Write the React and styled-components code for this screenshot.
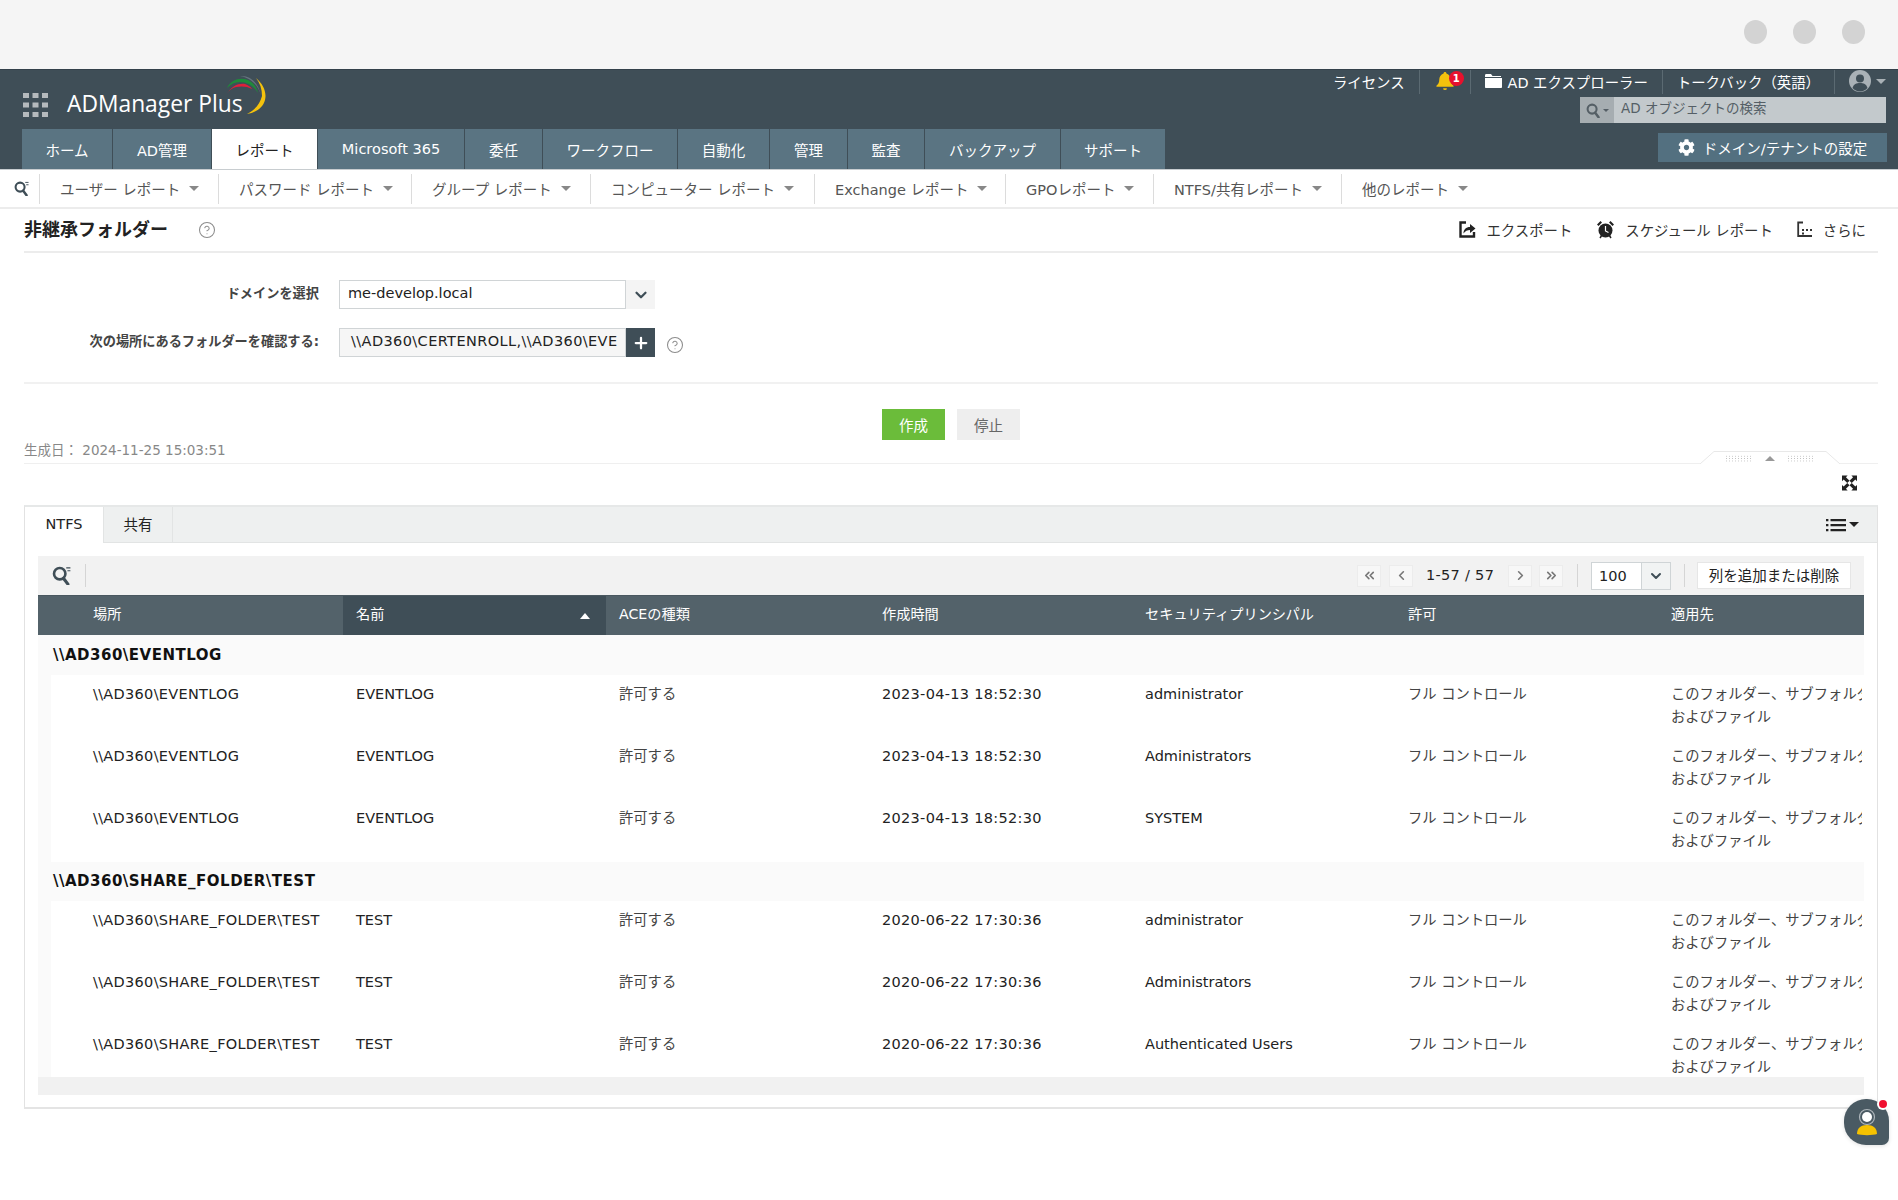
import styled, { createGlobalStyle } from "styled-components";
import { CircleHelp, ChevronDown, ChevronLeft, ChevronRight, ChevronsLeft, ChevronsRight, Plus } from "lucide-react";
import { FaCog } from "react-icons/fa";

const FONT = `"DejaVu Sans", "Noto Sans CJK JP", sans-serif`;

const Global = createGlobalStyle`
  html, body { margin: 0; padding: 0; background: #fff; }
  body { font-family: ${FONT}; color: #222; }
  * { box-sizing: border-box; }
`;

const Page = styled.div`
  width: 1898px;
  height: 1200px;
  overflow: hidden;
  position: relative;
`;

const WindowBar = styled.div`
  height: 69px;
  background: #f5f5f5;
  display: flex;
  justify-content: flex-end;
  align-items: flex-start;
  gap: 26px;
  padding: 20px 33px 0 0;
`;

const WindowDot = styled.span`
  width: 23px;
  height: 24px;
  border-radius: 50%;
  background: #d3d3d3;
`;

const Header = styled.header`
  height: 101px;
  background: #3f4e57;
  border-top: 1px solid #33404a;
  border-bottom: 1px solid #c8cdd0;
  display: flex;
  flex-direction: column;
`;

const HeaderTop = styled.div`
  height: 59px;
  display: flex;
  justify-content: space-between;
  padding: 0 12px 0 23px;
`;

const Brand = styled.div`
  display: flex;
  align-items: center;
  gap: 19px;
  padding-top: 11px;
`;

const BrandName = styled.span`
  font-family: "Open Sans", sans-serif;
  font-size: 22.8px;
  font-weight: 500;
  color: #fff;
`;

const LogoWrap = styled.div`
  position: relative;
  line-height: 31px;
`;

const LogoMark = styled.svg`
  position: absolute;
  left: 160px;
  top: -12px;
  overflow: visible;
`;

const UtilColumn = styled.div`
  display: flex;
  flex-direction: column;
  align-items: flex-end;
`;

const UtilRow = styled.div`
  height: 27px;
  display: flex;
  align-items: flex-start;
  color: #fff;
  font-size: 14.4px;
`;

const UtilItem = styled.div`
  display: flex;
  align-items: center;
  gap: ${(p) => (p.$last ? 5 : 6)}px;
  height: 24px;
  padding: 0 ${(p) => (p.$last ? 0 : p.$pad || 14)}px 2px ${(p) => p.$pad || 14}px;
  border-right: ${(p) => (p.$last ? "none" : "1px solid #5b6a72")};
  position: relative;
`;

const Badge = styled.span`
  position: absolute;
  top: 1px;
  right: 6px;
  width: 15px;
  height: 15px;
  border-radius: 50%;
  background: #e8112d;
  color: #fff;
  font-size: 10px;
  font-weight: 700;
  line-height: 15px;
  text-align: center;
`;

const SearchBox = styled.div`
  width: 306px;
  height: 26px;
  display: flex;
  background: #c3c9cc;
  color: #555f66;
  font-size: 13.5px;
  line-height: 23px;
`;

const SearchIconBox = styled.div`
  width: 34px;
  background: #a6adb1;
  display: flex;
  align-items: center;
  justify-content: center;
  gap: 2px;
`;

const SearchText = styled.span`
  padding-left: 7px;
`;

const HeaderBottom = styled.div`
  height: 40px;
  display: flex;
  justify-content: space-between;
  padding: 0 11px 0 22px;
`;

const Tabs = styled.nav`
  display: flex;
  gap: 1px;
`;

const Tab = styled.div`
  width: ${(p) => p.$w}px;
  display: flex;
  align-items: center;
  justify-content: center;
  font-size: 14.5px;
  background: ${(p) => (p.$active ? "#fff" : "#5a7482")};
  color: ${(p) => (p.$active ? "#222" : "#fff")};
`;

const SettingsButton = styled.div`
  width: 229px;
  height: 29px;
  margin-top: 4px;
  background: #537080;
  color: #fff;
  font-size: 14.5px;
  display: flex;
  align-items: center;
  justify-content: center;
  gap: 8px;
`;

const SubNav = styled.nav`
  height: 39px;
  display: flex;
  align-items: center;
  padding-left: 14px;
  border-bottom: 2px solid #ececec;
`;

const SubSearch = styled.div`
  width: 26px;
  height: 30px;
  display: flex;
  align-items: center;
  border-right: 1px solid #dcdcdc;
`;

const SubItem = styled.div`
  width: ${(p) => p.$w}px;
  height: 30px;
  padding-left: 20px;
  display: flex;
  align-items: center;
  gap: 9px;
  font-size: 14.5px;
  color: #555;
  white-space: nowrap;
  border-right: ${(p) => (p.$last ? "none" : "1px solid #dcdcdc")};
`;

const Caret = styled.span`
  width: 0;
  height: 0;
  border-left: ${(p) => p.$size || 5}px solid transparent;
  border-right: ${(p) => p.$size || 5}px solid transparent;
  border-top: ${(p) => p.$size || 5}px solid ${(p) => p.$color || "#888"};
  transform: ${(p) => (p.$up ? "rotate(180deg)" : "none")};
`;

const Content = styled.main`
  padding: 0 20px 0 24px;
`;

const TitleRow = styled.div`
  height: 44px;
  display: flex;
  align-items: center;
  justify-content: space-between;
  border-bottom: 2px solid #ececec;
`;

const TitleLeft = styled.div`
  display: flex;
  align-items: center;
  gap: 30px;
`;

const Title = styled.h1`
  margin: 0;
  font-size: 18px;
  font-weight: 700;
  color: #222;
  position: relative;
  top: -2px;
`;

const Actions = styled.div`
  display: flex;
  align-items: center;
  gap: 24px;
  padding: 0 12px 2px 0;
`;

const Action = styled.div`
  display: flex;
  align-items: center;
  gap: 10px;
  font-size: 14.4px;
  color: #333;
`;

const FormArea = styled.section`
  height: 131px;
  padding-top: 27px;
  border-bottom: 2px solid #f1f1f1;
  display: flex;
  flex-direction: column;
  gap: 19px;
`;

const FormRow = styled.div`
  display: flex;
  align-items: center;
  height: 29px;
`;

const FormLabel = styled.label`
  width: 295px;
  text-align: right;
  font-size: 13.2px;
  font-weight: 600;
  color: #444;
  margin: 0 20px 5px 0;
`;

const FieldBox = styled.div`
  width: 316px;
  height: 29px;
  border: 1px solid #d0d4d6;
  background: ${(p) => p.$bg || "#fff"};
  display: flex;
  font-size: 14.5px;
  color: #222;
`;

const FieldText = styled.div`
  flex: 1;
  line-height: 25px;
  padding-left: ${(p) => p.$pad || 8}px;
  letter-spacing: ${(p) => p.$spacing || 0}px;
  overflow: hidden;
  white-space: nowrap;
`;

const FieldChevron = styled.div`
  width: 30px;
  margin: -1px -1px -1px 0;
  display: flex;
  align-items: center;
  justify-content: center;
  background: ${(p) => (p.$dark ? "#3f4e57" : "#f4f4f4")};
  border-left: 1px solid #d0d4d6;
  color: ${(p) => (p.$dark ? "#fff" : "#3f4e57")};
`;

const FieldHelp = styled.span`
  margin: 5px 0 0 11px;
  display: flex;
`;

const ButtonRow = styled.div`
  display: flex;
  justify-content: center;
  gap: 12px;
  padding: 25px 0 0;
  height: 57px;
`;

const Button = styled.div`
  width: 63px;
  height: 31px;
  display: flex;
  align-items: center;
  justify-content: center;
  font-size: 14.5px;
  background: ${(p) => (p.$primary ? "#6bbc3a" : "#eeeeee")};
  color: ${(p) => (p.$primary ? "#fff" : "#666")};
`;

const GeneratedRow = styled.div`
  height: 23px;
  line-height: 18px;
  font-size: 13.5px;
  color: #888;
  border-bottom: 1px solid #efefef;
  position: relative;
`;

const Handle = styled.div`
  position: absolute;
  right: 38px;
  bottom: -1px;
  width: 140px;
  height: 13px;
  display: flex;
  align-items: center;
  justify-content: center;
  gap: 12px;
  padding-top: 2px;
`;

const HandleShape = styled.svg`
  position: absolute;
  left: 0;
  top: 0;
`;

const HandleDots = styled.span`
  width: 28px;
  height: 7px;
  position: relative;
  background-image: radial-gradient(#bbb 0.7px, transparent 0.8px);
  background-size: 3px 2.4px;
`;

const ExpandRow = styled.div`
  height: 41px;
  display: flex;
  align-items: center;
  justify-content: flex-end;
  padding: 0 21px 3px 0;
`;

const Panel = styled.section`
  height: 604px;
  width: 1854px;
  border: 1px solid #e2e2e2;
  border-top: 2px solid #e6e8e8;
  border-bottom: 2px solid #e4e4e4;
`;

const PanelTabs = styled.div`
  height: 36px;
  background: #eef0f0;
  border-bottom: 1px solid #e2e4e4;
  display: flex;
  align-items: stretch;
`;

const PanelTab = styled.div`
  width: ${(p) => p.$w}px;
  display: flex;
  align-items: center;
  justify-content: center;
  padding-bottom: 2px;
  font-size: 14.5px;
  color: #222;
  background: ${(p) => (p.$active ? "#fff" : "transparent")};
  margin-bottom: ${(p) => (p.$active ? "-1px" : "0")};
  border-right: 1px solid #e2e4e4;
`;

const ListMenu = styled.div`
  margin-left: auto;
  padding-right: 18px;
  display: flex;
  align-items: center;
  gap: 3px;
`;

const Grid = styled.div`
  margin: 13px 13px 0 13px;
`;

const Toolbar = styled.div`
  height: 39px;
  background: #f2f2f2;
  display: flex;
  align-items: center;
  padding: 0 13px 0 14px;
  font-size: 14.5px;
  color: #222;
`;

const ToolSearch = styled.div`
  height: 23px;
  width: 34px;
  display: flex;
  align-items: center;
  border-right: 1px solid #d5d5d5;
`;

const Pager = styled.div`
  margin-left: auto;
  display: flex;
  align-items: center;
`;

const PageBtn = styled.div`
  width: 24px;
  height: 22px;
  margin-right: ${(p) => p.$mr || 0}px;
  background: #f7f7f7;
  border: 1px solid #ececec;
  color: #777;
  display: flex;
  align-items: center;
  justify-content: center;
`;

const PageCount = styled.span`
  width: 82px;
  margin-bottom: 2px;
  letter-spacing: 0.3px;
  white-space: nowrap;
`;

const ToolSep = styled.span`
  width: 1px;
  height: 23px;
  background: #d5d5d5;
  margin: 0 ${(p) => p.$r}px 0 ${(p) => p.$l}px;
`;

const SizeSelect = styled.div`
  width: 80px;
  height: 28px;
  display: flex;
  background: #fff;
  border: 1px solid #cfd4d6;
  line-height: 26px;
  padding-left: 7px;
`;

const SizeChevron = styled.div`
  margin-left: auto;
  width: 29px;
  background: #f1f3f3;
  border-left: 1px solid #cfd4d6;
  display: flex;
  align-items: center;
  justify-content: center;
  color: #3f4e57;
`;

const ColumnButton = styled.div`
  width: 154px;
  height: 27px;
  background: #fff;
  border: 1px solid #e6e6e6;
  font-size: 14.5px;
  display: flex;
  align-items: center;
  justify-content: center;
  padding-bottom: 2px;
`;

const Table = styled.div`
  height: 500px;
  overflow: hidden;
  position: relative;
`;

const Row = styled.div`
  display: grid;
  grid-template-columns: 305px repeat(5, 263px) 204px;
`;

const HeadRow = styled(Row)`
  height: 40px;
  background: #53626a;
  color: #fff;
  font-size: 14.2px;
  border-top: 1px solid #4a5860;
`;

const HeadCell = styled.div`
  display: flex;
  align-items: center;
  justify-content: space-between;
  padding: 0 16px 5px ${(p) => (p.$first ? 55 : 13)}px;
  background: ${(p) => (p.$sorted ? "#3f4e57" : "transparent")};
`;

const SortArrow = styled.span`
  width: 0;
  height: 0;
  margin-top: 5px;
  border-left: 5px solid transparent;
  border-right: 5px solid transparent;
  border-bottom: 6px solid #fff;
`;

const GroupRow = styled.div`
  height: ${(p) => p.$h}px;
  background: #fafafa;
  padding-left: 15px;
  display: flex;
  align-items: center;
  font-size: 15px;
  font-weight: 700;
  letter-spacing: 0.5px;
  color: #111;
`;

const DataRow = styled(Row)`
  height: 62.4px;
  font-size: 14.5px;
  color: #222;
  background: linear-gradient(to right, #fafafa 13px, #fff 13px);
  line-height: 23px;
  overflow: hidden;
`;

const Cell = styled.div`
  padding: 8px 0 0 ${(p) => (p.$first ? 55 : 13)}px;
  white-space: nowrap;
  overflow: hidden;
  letter-spacing: ${(p) => (p.$wide ? "0.3px" : "0")};
  font-size: ${(p) => (p.$ja ? "14.3px" : "inherit")};
  color: ${(p) => (p.$ja ? "#444" : "inherit")};
`;

const TableFoot = styled.div`
  position: absolute;
  left: 0;
  right: 0;
  bottom: 0;
  height: 18px;
  background: #f1f1f1;
`;

const ChatButton = styled.div`
  position: absolute;
  left: 1844px;
  top: 1099px;
  width: 45px;
  height: 46px;
  background: #4a5a63;
  border-radius: 22px 22px 7px 22px;
  display: flex;
  align-items: center;
  justify-content: center;
  box-shadow: 0 1px 4px rgba(0, 0, 0, 0.12);
`;

const ChatDot = styled.span`
  position: absolute;
  top: 1px;
  right: 2px;
  width: 8px;
  height: 8px;
  border-radius: 50%;
  background: #f01030;
  box-shadow: 0 0 0 2px #fff;
`;

const mainTabs = [
  ["ホーム", 90],
  ["AD管理", 98],
  ["レポート", 105, true],
  ["Microsoft 365", 146],
  ["委任", 77],
  ["ワークフロー", 134],
  ["自動化", 91],
  ["管理", 77],
  ["監査", 76],
  ["バックアップ", 135],
  ["サポート", 104],
];

const subItems = [
  ["ユーザー レポート", 179],
  ["パスワード レポート", 193],
  ["グループ レポート", 179],
  ["コンピューター レポート", 224],
  ["Exchange レポート", 191],
  ["GPOレポート", 148],
  ["NTFS/共有レポート", 188],
  ["他のレポート", 180, true],
];

const columns = ["場所", "名前", "ACEの種類", "作成時間", "セキュリティプリンシパル", "許可", "適用先"];

const groups = [
  {
    name: "\\\\AD360\\EVENTLOG",
    height: 39.5,
    place: "\\\\AD360\\EVENTLOG",
    short: "EVENTLOG",
    time: "2023-04-13 18:52:30",
    people: ["administrator", "Administrators", "SYSTEM"],
  },
  {
    name: "\\\\AD360\\SHARE_FOLDER\\TEST",
    height: 39,
    place: "\\\\AD360\\SHARE_FOLDER\\TEST",
    short: "TEST",
    time: "2020-06-22 17:30:36",
    people: ["administrator", "Administrators", "Authenticated Users"],
  },
];

const SearchGlass = ({ size = 16, color = "#3f4e57", lines = true }) => (
  <svg width={size} height={size} viewBox="0 0 16 16" fill="none">
    <circle cx="6.5" cy="6.5" r="4.8" stroke={color} strokeWidth="2.2" />
    <path d="M9.800 10.500l3.600 4.800" stroke={color} strokeWidth="2.600" strokeLinecap="round" />
    {lines && <path d="M12 1.500h3.500M13 4h2.500" stroke={color} strokeWidth="1" />}
  </svg>
);

const Logo = () => (
  <LogoMark width="40" height="38" viewBox="0 0 40 38">
    <path d="M13 0C24-1 32 8 34 20C32 10 24 2 13 0Z" fill="#66757e" />
    <path d="M0 12C4 3 14 1 21 4C27 7 30 12 31 17C27 10 20 6 13 6C8 6 4 8 0 12Z" fill="#1f8a3b" />
    <path d="M0 18C4 10 12 7 18 8C21 9 24 11 25 13C20 10 14 10 9 11C5 12 2 14 0 18Z" fill="#e0203a" />
    <path d="M29 2C36 8 40 16 38 24C36 32 28 37 20 38C28 34 33 28 35 20C35 13 33 7 29 2Z" fill="#f4c20d" />
  </LogoMark>
);

const Bell = () => (
  <svg width="18" height="20" viewBox="0 0 18 21">
    <path d="M9 1c1 0 1.500.7 1.500 1.500C13.500 3.500 15 6 15 9c0 3 1 5 3 6.500v1H0v-1C2 14 3 12 3 9c0-3 1.500-5.500 4.500-6.500C7.500 1.700 8 1 9 1Z" fill="#f4c20d" />
    <path d="M7 18h4a2 2 0 0 1-4 0Z" fill="#f4c20d" />
  </svg>
);

const FolderIcon = () => (
  <svg width="17" height="14" viewBox="0 0 17 14" fill="#fff">
    <path d="M0 1.500C0 .7.500 0 1.200 0H6l1.500 2H16v1H0ZM0 4h17v9c0 .6-.5 1-1 1H1c-.6 0-1-.4-1-1Z" />
  </svg>
);

const UserIcon = () => (
  <svg width="22" height="22" viewBox="0 0 22 22">
    <circle cx="11" cy="11" r="11" fill="#a9b1b6" />
    <circle cx="11" cy="8.500" r="4" fill="#3f4e57" />
    <path d="M3.500 18c1-4 4-5 7.500-5s6.500 1 7.500 5a10 10 0 0 1-15 0Z" fill="#3f4e57" />
  </svg>
);

const ExportIcon = () => (
  <svg width="17" height="17" viewBox="0 0 17 17" fill="none">
    <path d="M7 1.500H1.500V15.500H15V11" stroke="#222" strokeWidth="2.400" />
    <path d="M4.500 12.500c0-4 2.500-6.500 6.500-6.500V3l5.500 4.500L11 12V9c-2.500 0-5 1-6.500 3.500Z" fill="#222" />
  </svg>
);

const AlarmIcon = () => (
  <svg width="19" height="19" viewBox="0 0 19 19">
    <circle cx="9.500" cy="10.500" r="7" fill="#222" />
    <path d="M9.500 6v5l3 1.500" stroke="#fff" strokeWidth="1.200" fill="none" />
    <path d="M1 4.500 4.500 1 6 2.500 2.500 6ZM18 4.500 14.500 1 13 2.500 16.500 6Z" fill="#222" />
    <path d="M4 18l2-3M15 18l-2-3" stroke="#222" strokeWidth="1.500" />
  </svg>
);

const MoreIcon = () => (
  <svg width="16" height="16" viewBox="0 0 16 16" fill="none">
    <path d="M6 1.500H1.200V15H15" stroke="#333" strokeWidth="1.800" />
    <path d="M5 8h2v2H5zM9 8h2v2H9zM13 8h2v2h-2zM5 11.500h2v2H5z" fill="#333" />
  </svg>
);

const ExpandIcon = () => (
  <svg width="15" height="16" viewBox="0 0 16 16" fill="#222">
    <path d="M0 0h6L4.200 1.800 8 5.600 5.600 8 1.800 4.200 0 6ZM16 0v6l-1.800-1.800L10.400 8 8 5.600l3.800-3.800L10 0ZM0 16v-6l1.800 1.800L5.600 8 8 10.400l-3.800 3.800L6 16ZM16 16h-6l1.800-1.800L8 10.400 10.400 8l3.800 3.800L16 10Z" />
  </svg>
);

const ListIcon = () => (
  <svg width="20" height="14" viewBox="0 0 20 14" fill="#222">
    <path d="M0 1h2.400v2.200H0zM0 6h2.400v2.200H0zM0 11h2.400v2.200H0zM4.500 1H20v2.200H4.500zM4.500 6H20v2.200H4.500zM4.500 11H20v2.200H4.500z" />
  </svg>
);

const ChatFace = () => (
  <svg width="24" height="28" viewBox="0 0 24 28" fill="none">
    <circle cx="12" cy="9" r="7.500" stroke="#aeb6bb" strokeWidth="1.200" />
    <circle cx="12" cy="9" r="5" fill="#fff" />
    <path d="M2 26C2 20 6 17 12 17S22 20 22 26C18 27.500 6 27.500 2 26Z" fill="#f6c200" />
  </svg>
);

const HelpIcon = ({ size = 18 }) => <CircleHelp size={size} color="#8c8c8c" strokeWidth={1.4} />;

const App = () => {
  return (
    <Page>
      <Global />
      <WindowBar>
        <WindowDot />
        <WindowDot />
        <WindowDot />
      </WindowBar>

      <Header>
        <HeaderTop>
          <Brand>
            <svg width="25" height="24" viewBox="0 0 25 24" fill="#b5babd">
              <path d="M0 0h6v5H0zM9.500 0h6v5h-6zM19 0h6v5h-6zM0 9.500h6v5H0zM9.500 9.500h6v5h-6zM19 9.500h6v5h-6zM0 19h6v5H0zM9.500 19h6v5h-6zM19 19h6v5h-6z" />
            </svg>
            <LogoWrap>
              <BrandName>ADManager Plus</BrandName>
              <Logo />
            </LogoWrap>
          </Brand>
          <UtilColumn>
            <UtilRow>
              <UtilItem $pad={14}>ライセンス</UtilItem>
              <UtilItem $pad={16}>
                <Bell />
                <Badge>1</Badge>
              </UtilItem>
              <UtilItem>
                <FolderIcon />
                AD エクスプローラー
              </UtilItem>
              <UtilItem>トークバック（英語）</UtilItem>
              <UtilItem $last>
                <UserIcon />
                <Caret $color="#a9b1b6" />
              </UtilItem>
            </UtilRow>
            <SearchBox>
              <SearchIconBox>
                <SearchGlass size={15} color="#555f66" lines={false} />
                <Caret $size={3} $color="#555f66" />
              </SearchIconBox>
              <SearchText>AD オブジェクトの検索</SearchText>
            </SearchBox>
          </UtilColumn>
        </HeaderTop>
        <HeaderBottom>
          <Tabs>
            {mainTabs.map(([label, w, active]) => (
              <Tab key={label} $w={w} $active={active}>
                {label}
              </Tab>
            ))}
          </Tabs>
          <SettingsButton>
            <FaCog size={17} color="#fff" />
            ドメイン/テナントの設定
          </SettingsButton>
        </HeaderBottom>
      </Header>

      <SubNav>
        <SubSearch>
          <SearchGlass size={15} />
        </SubSearch>
        {subItems.map(([label, w, last]) => (
          <SubItem key={label} $w={w} $last={last}>
            {label}
            <Caret />
          </SubItem>
        ))}
      </SubNav>

      <Content>
        <TitleRow>
          <TitleLeft>
            <Title>非継承フォルダー</Title>
            <HelpIcon />
          </TitleLeft>
          <Actions>
            <Action>
              <ExportIcon />
              エクスポート
            </Action>
            <Action>
              <AlarmIcon />
              スケジュール レポート
            </Action>
            <Action>
              <MoreIcon />
              さらに
            </Action>
          </Actions>
        </TitleRow>

        <FormArea>
          <FormRow>
            <FormLabel>ドメインを選択</FormLabel>
            <FieldBox>
              <FieldText>me-develop.local</FieldText>
              <FieldChevron>
                <ChevronDown size={18} strokeWidth={3} />
              </FieldChevron>
            </FieldBox>
          </FormRow>
          <FormRow>
            <FormLabel>次の場所にあるフォルダーを確認する:</FormLabel>
            <FieldBox $bg="#f6f6f6">
              <FieldText $pad={11} $spacing={0.4}>
                {"\\\\AD360\\CERTENROLL,\\\\AD360\\EVE"}
              </FieldText>
              <FieldChevron $dark>
                <Plus size={18} strokeWidth={3} />
              </FieldChevron>
            </FieldBox>
            <FieldHelp>
              <HelpIcon />
            </FieldHelp>
          </FormRow>
        </FormArea>

        <ButtonRow>
          <Button $primary>作成</Button>
          <Button>停止</Button>
        </ButtonRow>

        <GeneratedRow>
          生成日： 2024-11-25 15:03:51
          <Handle>
            <HandleShape width="140" height="13" viewBox="0 0 140 13">
              <path d="M0 13L14 .5H126L140 13" fill="#fff" stroke="#e8e8e8" />
            </HandleShape>
            <HandleDots />
            <Caret $up $color="#999" />
            <HandleDots />
          </Handle>
        </GeneratedRow>

        <ExpandRow>
          <ExpandIcon />
        </ExpandRow>

        <Panel>
          <PanelTabs>
            <PanelTab $w={79} $active>
              NTFS
            </PanelTab>
            <PanelTab $w={69}>共有</PanelTab>
            <ListMenu>
              <ListIcon />
              <Caret $color="#222" />
            </ListMenu>
          </PanelTabs>
          <Grid>
            <Toolbar>
              <ToolSearch>
                <SearchGlass size={19} />
              </ToolSearch>
              <Pager>
                <PageBtn $mr={8}>
                  <ChevronsLeft size={15} strokeWidth={2.6} />
                </PageBtn>
                <PageBtn $mr={13}>
                  <ChevronLeft size={15} strokeWidth={2.6} />
                </PageBtn>
                <PageCount>1-57 / 57</PageCount>
                <PageBtn $mr={7}>
                  <ChevronRight size={15} strokeWidth={2.6} />
                </PageBtn>
                <PageBtn>
                  <ChevronsRight size={15} strokeWidth={2.6} />
                </PageBtn>
                <ToolSep $l={14} $r={13} />
                <SizeSelect>
                  100
                  <SizeChevron>
                    <ChevronDown size={16} strokeWidth={3} />
                  </SizeChevron>
                </SizeSelect>
                <ToolSep $l={13} $r={12} />
                <ColumnButton>列を追加または削除</ColumnButton>
              </Pager>
            </Toolbar>
            <Table>
              <HeadRow>
                {columns.map((col, i) => (
                  <HeadCell key={col} $first={i === 0} $sorted={i === 1}>
                    {col}
                    {i === 1 && <SortArrow />}
                  </HeadCell>
                ))}
              </HeadRow>
              {groups.map((g) => (
                <div key={g.name}>
                  <GroupRow $h={g.height}>{g.name}</GroupRow>
                  {g.people.map((person) => (
                    <DataRow key={person}>
                      <Cell $first $wide>
                        {g.place}
                      </Cell>
                      <Cell>{g.short}</Cell>
                      <Cell $ja>許可する</Cell>
                      <Cell $wide>{g.time}</Cell>
                      <Cell>{person}</Cell>
                      <Cell $ja>フル コントロール</Cell>
                      <Cell $ja>
                        このフォルダー、サブフォルダー、
                        <br />
                        およびファイル
                      </Cell>
                    </DataRow>
                  ))}
                </div>
              ))}
              <TableFoot />
            </Table>
          </Grid>
        </Panel>
      </Content>

      <ChatButton>
        <ChatFace />
        <ChatDot />
      </ChatButton>
    </Page>
  );
};

export default App;
